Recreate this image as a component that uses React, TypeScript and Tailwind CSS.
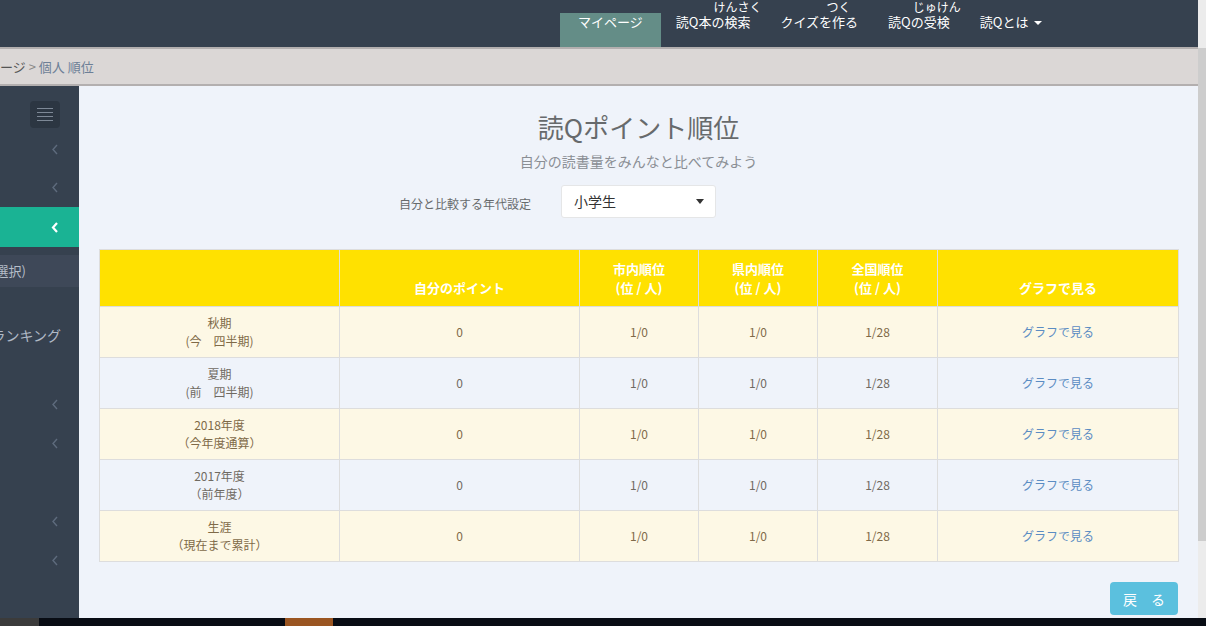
import React from 'react';

const font = { fontFamily: '"Noto Sans CJK JP", "Noto Sans", sans-serif' };

type Row = { label: string; sub: string; pts: string; city: string; pref: string; nation: string };

const rows: Row[] = [
  { label: '秋期', sub: '(今　四半期)', pts: '0', city: '1/0', pref: '1/0', nation: '1/28' },
  { label: '夏期', sub: '(前　四半期)', pts: '0', city: '1/0', pref: '1/0', nation: '1/28' },
  { label: '2018年度', sub: '（今年度通算）', pts: '0', city: '1/0', pref: '1/0', nation: '1/28' },
  { label: '2017年度', sub: '（前年度）', pts: '0', city: '1/0', pref: '1/0', nation: '1/28' },
  { label: '生涯', sub: '（現在まで累計）', pts: '0', city: '1/0', pref: '1/0', nation: '1/28' },
];

function Chevron({ active }: { active?: boolean }) {
  return (
    <svg width="8" height="11" viewBox="0 0 8 11" className="block">
      <path
        d="M6 1 L2 5.5 L6 10"
        fill="none"
        stroke={active ? '#ffffff' : '#5e6b7d'}
        strokeWidth={active ? 2.2 : 1.4}
      />
    </svg>
  );
}

function Ruby({ base, rt }: { base: string; rt: string }) {
  return (
    <span className="relative inline-block">
      {base}
      <span className="absolute left-1/2 -top-[12px] -translate-x-1/2 whitespace-nowrap text-[12px] leading-[12px] text-white">
        {rt}
      </span>
    </span>
  );
}

function Header() {
  return (
    <div className="h-[47px] bg-[#36414f] flex items-end">
      <ul className="flex h-[34px] ml-[560px] text-[13px] leading-[18px] text-white">
        <li className="px-[18px] bg-[#648d87] whitespace-nowrap">マイページ</li>
        <li className="px-[15px] whitespace-nowrap">
          読Q本の<Ruby base="検索" rt="けんさく" />
        </li>
        <li className="px-[15px] whitespace-nowrap">
          クイズを<Ruby base="作" rt="つく" />る
        </li>
        <li className="px-[15px] whitespace-nowrap">
          読Qの<Ruby base="受検" rt="じゅけん" />
        </li>
        <li className="px-[15px] whitespace-nowrap flex items-start">
          読Qとは
          <span className="ml-[6px] mt-[8px] w-0 h-0 border-t-[4px] border-t-white border-x-[4px] border-x-transparent" />
        </li>
      </ul>
    </div>
  );
}

function Breadcrumb() {
  return (
    <div className="h-[35px] bg-[#dbd7d6] flex items-center overflow-hidden border-y-2 border-[#b3afaf] box-content">
      <div className="ml-[-39px] whitespace-nowrap text-[13px] leading-[16px]">
        <span className="text-[#555]">マイページ</span>
        <span className="text-[#888]"> &gt; </span>
        <span className="text-[#6d7f97]">個人 順位</span>
      </div>
    </div>
  );
}

function Sidebar() {
  return (
    <div className="w-[79px] shrink-0 bg-[#36414f] flex flex-col overflow-hidden">
      <div className="h-[15px]" />
      <div className="flex justify-end pr-[19px]">
        <div className="w-[30px] h-[27px] rounded-[4px] bg-[#2c3642] flex flex-col items-center justify-center gap-[3px]">
          <span className="block w-[16px] h-px bg-[#7d8896]" />
          <span className="block w-[16px] h-px bg-[#7d8896]" />
          <span className="block w-[16px] h-px bg-[#7d8896]" />
          <span className="block w-[16px] h-px bg-[#7d8896]" />
        </div>
      </div>
      <div className="h-[39px] mt-[1px] flex items-center justify-end pr-[20px] pt-[2px]">
        <Chevron />
      </div>
      <div className="h-[39px] flex items-center justify-end pr-[20px]">
        <Chevron />
      </div>
      <div className="h-[40px] bg-[#1ab394] flex items-center justify-end pr-[20px]">
        <Chevron active />
      </div>
      <div className="h-[8px]" />
      <div className="h-[32px] bg-[#3e4858] flex items-center justify-end pr-[53px] whitespace-nowrap text-[13px] text-[#b6bec9]">
        (学年選択)
      </div>
      <div className="h-[98px] flex items-center justify-end pr-[18px] pb-[2px] whitespace-nowrap text-[14px] text-[#b0b9c6]">
        読書ランキング
      </div>
      <div className="h-[39px] flex items-center justify-end pr-[20px]">
        <Chevron />
      </div>
      <div className="h-[39px] flex items-center justify-end pr-[20px]">
        <Chevron />
      </div>
      <div className="h-[39px]" />
      <div className="h-[39px] flex items-center justify-end pr-[20px]">
        <Chevron />
      </div>
      <div className="h-[39px] flex items-center justify-end pr-[20px]">
        <Chevron />
      </div>
    </div>
  );
}

function RankTable() {
  const head = 'border border-[#dddddd] align-bottom pb-[9px] text-white font-bold text-[13px] leading-[19px] text-center';
  const cell = 'border border-[#dddddd] align-middle text-center text-[12px] leading-[18px]';
  return (
    <table className="w-[1079px] border-collapse table-fixed">
      <colgroup>
        <col className="w-[240px]" />
        <col className="w-[240px]" />
        <col className="w-[119px]" />
        <col className="w-[119px]" />
        <col className="w-[120px]" />
        <col className="w-[241px]" />
      </colgroup>
      <thead>
        <tr className="h-[57px] bg-[#ffe100]">
          <th className={head}></th>
          <th className={head}>自分のポイント</th>
          <th className={head}>市内順位<br />(位 / 人)</th>
          <th className={head}>県内順位<br />(位 / 人)</th>
          <th className={head}>全国順位<br />(位 / 人)</th>
          <th className={head}>グラフで見る</th>
        </tr>
      </thead>
      <tbody>
        {rows.map((r, i) => {
          const cream = i % 2 === 0;
          const txt = cream ? 'text-[#7f6a48]' : 'text-[#6f6a62]';
          return (
            <tr key={r.label} className={`h-[51px] ${cream ? 'bg-[#fdf8e5]' : 'bg-[#eff3fa]'}`}>
              <td className={`${cell} ${txt}`}>
                {r.label}
                <br />
                {r.sub}
              </td>
              <td className={`${cell} ${txt}`}>{r.pts}</td>
              <td className={`${cell} ${txt}`}>{r.city}</td>
              <td className={`${cell} ${txt}`}>{r.pref}</td>
              <td className={`${cell} ${txt}`}>{r.nation}</td>
              <td className={`${cell} text-[#5b8cc3]`}>グラフで見る</td>
            </tr>
          );
        })}
      </tbody>
    </table>
  );
}

function Content() {
  return (
    <div className="flex-1 bg-[#eff3fa] px-[20px] overflow-hidden">
      <h1 className="mt-[24px] text-center text-[26px] leading-[34px] text-[#676a6c]">読Qポイント順位</h1>
      <p className="mt-[7px] text-center text-[14px] leading-[20px] text-[#8a8e94]">自分の読書量をみんなと比べてみよう</p>
      <div className="mt-[14px] flex items-center ml-[300px]">
        <span className="text-[12px] leading-[18px] text-[#676a6c] mt-[4px]">自分と比較する年代設定</span>
        <div className="ml-[30px] w-[155px] h-[33px] bg-white border border-[#e5e6e7] rounded-[3px] flex items-center justify-between pl-[12px] pr-[11px]">
          <span className="text-[14px] text-[#333]">小学生</span>
          <span className="w-0 h-0 border-t-[5px] border-t-[#333] border-x-[4px] border-x-transparent" />
        </div>
      </div>
      <div className="mt-[31px]">
        <RankTable />
      </div>
      <div className="mt-[20px] flex justify-end">
        <button className="w-[68px] h-[33px] rounded-[4px] bg-[#5bc0de] text-white text-[14px] leading-[20px]">
          戻　る
        </button>
      </div>
    </div>
  );
}

export default function App() {
  return (
    <div className="w-[1206px] h-[626px] flex flex-col overflow-hidden" style={font}>
      <div className="flex h-[618px]">
        <div className="w-[1198px] flex flex-col">
          <Header />
          <Breadcrumb />
          <div className="flex flex-1 min-h-0">
            <Sidebar />
            <Content />
          </div>
        </div>
        <div className="w-[8px] bg-[#ececec] flex flex-col">
          <div className="h-[48px]" />
          <div className="h-[493px] bg-[#cdcdcd]" />
        </div>
      </div>
      <div className="h-[8px] flex bg-[#080c14]">
        <div className="w-[39px] bg-[#3b3b3b]" />
        <div className="w-[246px]" />
        <div className="w-[48px] bg-[#9a5521]" />
      </div>
    </div>
  );
}
